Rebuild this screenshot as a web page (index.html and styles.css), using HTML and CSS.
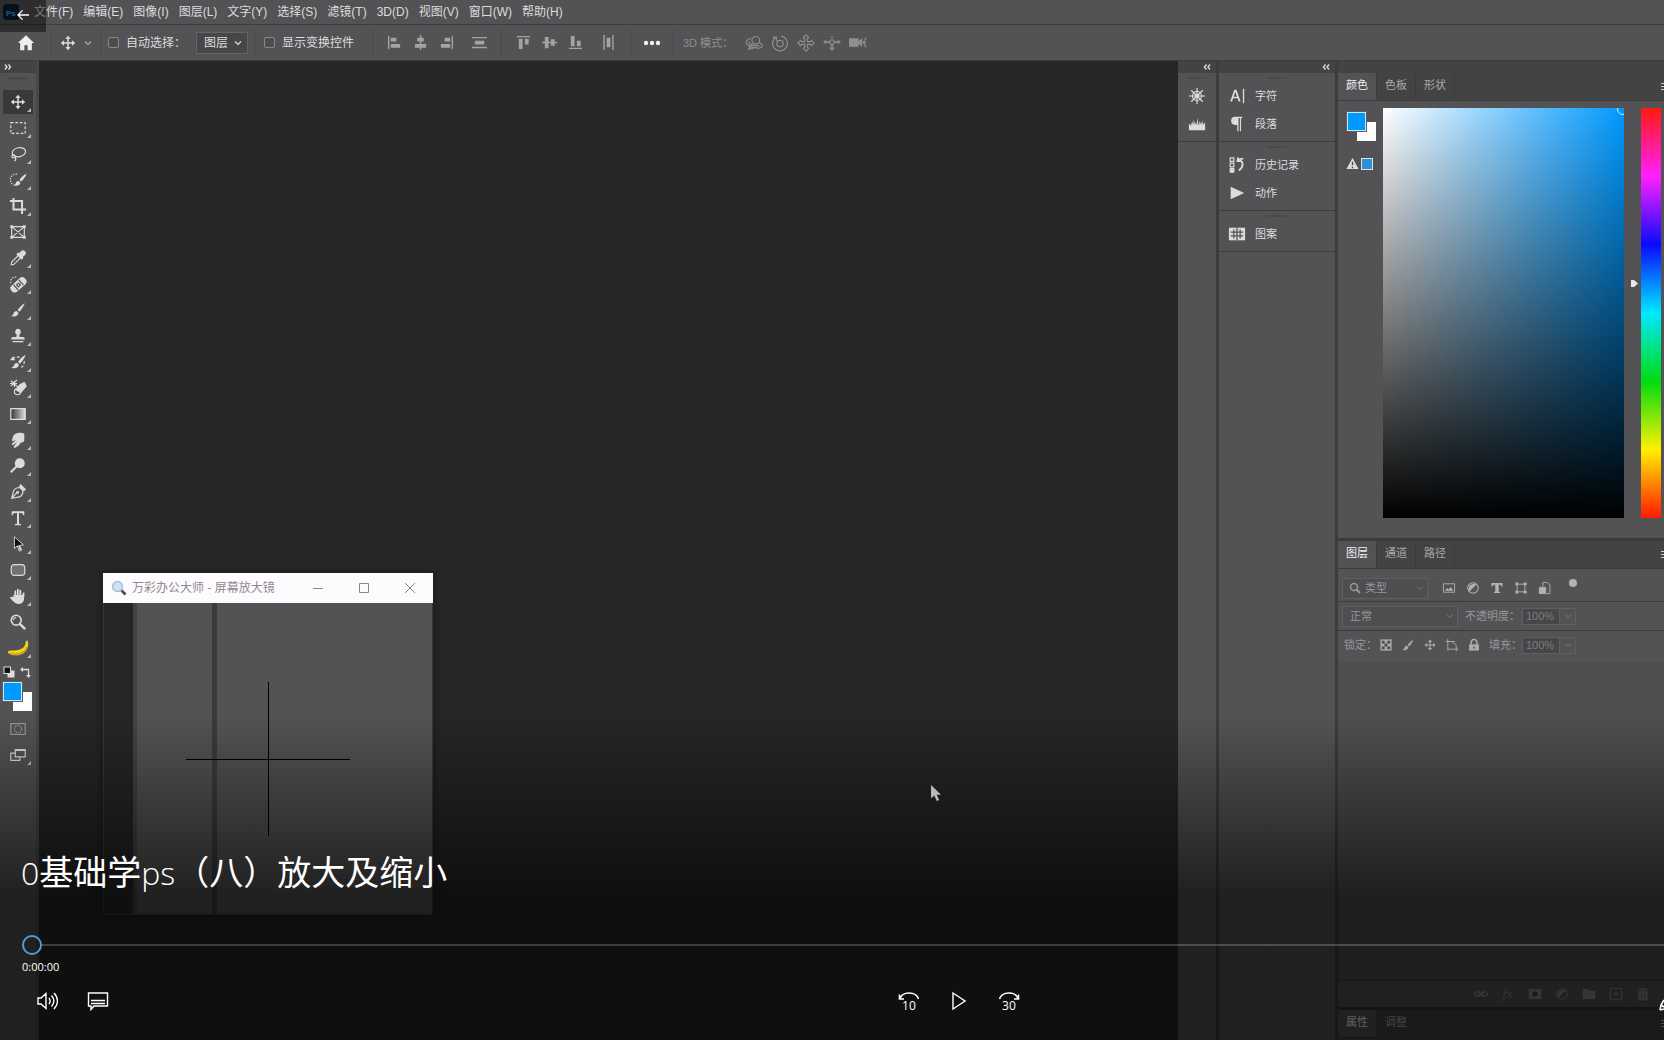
FILE: index.html
```
<!DOCTYPE html>
<html lang="zh-CN">
<head>
<meta charset="utf-8">
<title>0基础学ps（八）放大及缩小</title>
<link rel="stylesheet" href="styles.css">
</head>
<body>
<svg class="defs" aria-hidden="true">
  <symbol id="move" viewBox="0 0 20 20"><path d="M10 4v12M4 10h12" stroke="currentColor" stroke-width="1.6" fill="none"/><path d="M10 2l3 3.6H7zM10 18l3-3.6H7zM2 10l3.6-3v6zM18 10l-3.600-3v6z" fill="currentColor"/></symbol>
  <symbol id="brush" viewBox="0 0 20 20"><path d="M17.500 2.500c-3 1.500-6 5-8 7.500l2 2c2.500-2.500 5-6 6-9.500zM8.500 11c-2 0-3 1-3.500 3-.4 1.500-1.500 2.500-3 2.800 3 1.200 8 .7 8.500-3.800z" fill="currentColor"/></symbol>
  <symbol id="chev" viewBox="0 0 10 10"><path d="M2 3.500l3 3 3-3" fill="none" stroke="currentColor" stroke-width="1.200"/></symbol>
  <symbol id="lchev" viewBox="0 0 10 8"><path d="M4.500 1.500L2.500 4l2 2.500M8 1.500L6 4l2 2.500" fill="none" stroke="currentColor" stroke-width="1.400"/></symbol>
  <symbol id="lines" viewBox="0 0 10 10"><path d="M0 1.500h10M0 4.500h10M0 7.500h10" stroke="currentColor" stroke-width="1"/></symbol>
  <symbol id="half" viewBox="0 0 20 20"><circle cx="10" cy="10" r="7.500" fill="none" stroke="currentColor" stroke-width="1.500"/><path d="M15 5A7.300 7.300 0 0 0 5 15z" fill="currentColor"/></symbol>
</svg>
<div class="stage">
  <div class="app">
    <header class="menubar">
      <svg class="logo" viewBox="0 0 16 16" role="img" aria-label="Ps"><rect width="16" height="16" rx="3" fill="#06203c"/><text x="3" y="12" class="logo-text">Ps</text></svg>
      <nav class="menus">
        <a href="#">文件(F)</a><a href="#">编辑(E)</a><a href="#">图像(I)</a><a href="#">图层(L)</a><a href="#">文字(Y)</a><a href="#">选择(S)</a><a href="#">滤镜(T)</a><a href="#">3D(D)</a><a href="#">视图(V)</a><a href="#">窗口(W)</a><a href="#">帮助(H)</a>
      </nav>
    </header>

    <div class="options">
      <button class="home" aria-label="主页"><svg viewBox="0 0 20 20"><path d="M10 1.500L1 10h2.500v8h4.700v-5.500h3.600V18h4.700v-8H19z" fill="currentColor"/></svg></button>
      <button class="preset" aria-label="移动工具"><svg class="i18"><use href="#move"/></svg><svg class="i10"><use href="#chev"/></svg></button>
      <div class="group auto">
        <label class="check"><input type="checkbox"><span>自动选择：</span></label>
        <div class="picker"><select aria-label="自动选择"><option>图层</option><option>组</option></select><svg class="i10"><use href="#chev"/></svg></div>
      </div>
      <div class="group transform"><label class="check"><input type="checkbox"><span>显示变换控件</span></label></div>
      <div class="group aligns">
        <button aria-label="左对齐"><svg viewBox="0 0 16 16"><path d="M1 1h1.500v14H1zM4 3h6v4H4zM4 9.500h10v4H4z"/></svg></button>
        <button aria-label="水平居中"><svg viewBox="0 0 16 16"><path d="M7.300 0h1.500v16H7.300zM4.500 3h7v4h-7zM2 9.500h12v4H2z"/></svg></button>
        <button aria-label="右对齐"><svg viewBox="0 0 16 16"><path d="M13.500 1H15v14h-1.500zM6 3h6v4H6zM2 9.500h10v4H2z"/></svg></button>
        <button class="wide" aria-label="垂直分布"><svg viewBox="0 0 16 16"><path d="M0 2h16v1.500H0zM0 12.500h16V14H0zM3 6h10v4H3z"/></svg></button>
      </div>
      <div class="group valigns">
        <button aria-label="顶对齐"><svg viewBox="0 0 16 16"><path d="M1 1h14v1.500H1zM3 4h4v11H3zM9.500 4h4v6h-4z"/></svg></button>
        <button aria-label="垂直居中"><svg viewBox="0 0 16 16"><path d="M0 7.300h16v1.500H0zM3 2h4v12H3zM9.500 4.500h4v7h-4z"/></svg></button>
        <button aria-label="底对齐"><svg viewBox="0 0 16 16"><path d="M1 13.500h14V15H1zM3 1h4v11H3zM9.500 6h4v6h-4z"/></svg></button>
        <button class="wide" aria-label="水平分布"><svg viewBox="0 0 16 16"><path d="M2.500 0H4v16H2.500zM12 0h1.500v16H12zM6 3h4v10H6z"/></svg></button>
      </div>
      <div class="group more"><button aria-label="更多"><svg viewBox="0 0 18 6"><circle cx="3" cy="3" r="2.200"/><circle cx="9" cy="3" r="2.200"/><circle cx="15" cy="3" r="2.200"/></svg></button></div>
      <div class="group mode3d">
        <span>3D 模式：</span>
        <button aria-label="环绕"><svg viewBox="0 0 20 20" class="line"><circle cx="12" cy="7" r="4.200"/><path d="M7 5C2 6 0 8.500 2 11c3 4 14 6 16.500 3.500 1.500-1.600-.5-4-3-5.500M4 9c2 3 7 4.500 12 4"/><path d="M4 17l5-1-3-3z"/></svg></button>
        <button aria-label="滚动"><svg viewBox="0 0 20 20" class="line"><circle cx="10" cy="10.500" r="3.500"/><path d="M5 4a8.200 8.200 0 1 0 6-1.600M2 3.500h4v4"/></svg></button>
        <button aria-label="平移"><svg viewBox="0 0 20 20" class="line"><path d="M10 1l3 3-1.500 1v3.500H15L16 7l3 3-3 3-1-1.500h-3.500V15l1.500 1-3 3-3-3 1.500-1v-3.500H5L4 13l-3-3 3-3 1 1.500h3.500V5L7 4z"/></svg></button>
        <button aria-label="滑动"><svg viewBox="0 0 20 20" class="line"><circle cx="10" cy="9" r="2.500"/><path class="fill" d="M10 19l-3.500-4h7zM0 9l3.500-2.500v5zM20 9l-3.500-2.500v5zM10 2l1.500 2h-3z" stroke="none"/><path d="M3.500 9H7M13 9h3.500M10 12v3" stroke-width="2"/></svg></button>
        <button aria-label="变焦"><svg viewBox="0 0 20 20" class="line"><path class="fill" d="M0 5.500h10v8H0zM10 9.500L14 6v7z"/><path d="M19 4l-3 5.500 3 5.500M15 9.500h4"/></svg></button>
      </div>
    </div>

    <main class="workspace">
      <aside class="toolbar" aria-label="工具">
        <div class="strip"><svg class="flip"><use href="#lchev"/></svg></div>
        <div class="grip"></div>
        <div class="tools">
          <button class="on" aria-label="移动"><svg><use href="#move"/></svg></button>
          <button aria-label="选框"><svg viewBox="0 0 20 20" class="line"><rect x="2" y="4" width="16" height="12" stroke-dasharray="3 2"/></svg></button>
          <button aria-label="套索"><svg viewBox="0 0 20 20" class="line"><ellipse cx="11" cy="8" rx="7.500" ry="5" transform="rotate(-12 11 8)"/><path d="M5 11c-3 1-2 4 1 3 2-1 0-3-1-3zM7 14c1 1 0 3-1 4"/></svg></button>
          <button aria-label="快速选择"><svg viewBox="0 0 20 20" class="line"><path d="M9 3.500C4 3 1 6.500 1.500 10s3 6 6 6" stroke-dasharray="1.500 1.500"/><path class="fill" d="M19.500 3c-3 1-6 4-8 7l2 1.800c2.500-2.300 5-5.300 6-8.800zM10.500 11c-2 0-2.500 1-3 2.500-.4 1.500-1.200 2-2 2.500 3 1 7 0 7.200-3.300z" stroke="none"/></svg></button>
          <button aria-label="裁剪"><svg viewBox="0 0 20 20" class="line bold"><path d="M5 1v13h14M1 4.500h13.500V19"/></svg></button>
          <button class="single" aria-label="图框"><svg viewBox="0 0 20 20" class="line"><path d="M3 4h14v12H3zM3 4l14 12M17 4L3 16"/><path class="fill" d="M1.500 2.500h3v3h-3zM15.500 2.500h3v3h-3zM1.500 14.500h3v3h-3zM15.500 14.500h3v3h-3z" stroke="none"/></svg></button>
          <button aria-label="吸管"><svg viewBox="0 0 20 20" class="line"><path d="M10.500 7L3 14.500 2.500 17.500 5.500 17 13 9.500"/><path class="fill" d="M9 6l5 5 1.200-1.200-.8-1 3-2.500c2-2.500-1-5.500-3.500-3.500L11.500 5.500l-1-.8z"/></svg></button>
          <button aria-label="污点修复"><svg viewBox="0 0 20 20" class="line"><path d="M8 2.500C4 2 1 5 2 9" stroke-dasharray="1.500 1.500"/><g transform="rotate(-42 10.500 11)"><rect class="fill" x="1" y="7" width="19" height="8" rx="3.500"/><path d="M6.500 7v8M14.500 7v8" stroke="#535355"/><path d="M9 9.500h3v3H9z" stroke="#535355"/></g></svg></button>
          <button aria-label="画笔"><svg><use href="#brush"/></svg></button>
          <button aria-label="图章"><svg viewBox="0 0 20 20"><path d="M10 2a3.400 3.400 0 0 1 2 6c-1 1-.5 2.500 0 3h3.500c1.500 0 2 1 2 3H2.500c0-2 .5-3 2-3H8c.5-.5 1-2 0-3a3.400 3.400 0 0 1 2-6zM4 15.500h12V17H4z"/></svg></button>
          <button aria-label="历史画笔"><svg viewBox="0 0 20 20" class="line"><path d="M4 6c3-2 6-2 8-1M17 9c0 4-2 7-5 8" stroke-dasharray="3 2"/><path class="fill" d="M1 8l3.500-4.500L7 8zM18.500 2c-4 2-6.500 5-8.500 8l2 2c3-3 5.500-6 6.500-10zM9 11c-3 0-3 2-4 3.500-.5 1-1.500 1.500-2.500 1.500 3 2 8 1 8.500-3z" stroke="none"/></svg></button>
          <button aria-label="橡皮擦"><svg viewBox="0 0 20 20" class="line"><path d="M2 2l8 7M9 1L2 8M1 5h8M6 2v7"/><path class="fill" d="M12 6.500l5-2.500 2 4-6 7-5-3z"/><circle cx="9.500" cy="14" r="3.500"/></svg></button>
          <button aria-label="渐变"><svg viewBox="0 0 20 20"><defs><linearGradient id="gr"><stop stop-color="#333"/><stop offset="1" stop-color="#ddd"/></linearGradient></defs><rect x="2" y="4" width="16" height="12" fill="url(#gr)" stroke="#ddd" stroke-width="1.400"/></svg></button>
          <button aria-label="涂抹"><svg viewBox="0 0 20 20"><path d="M5 5c3-4 9-3.500 12-2v7c0 2-2 3-4 3-1 2-3 4-6 5.500-1.500.5-2.500-.5-1.500-1.500L9 12.500l-4.500 3c-1.500.5-2-.5-1-1.500L8 10l-4 1.500C3 11 4 7 5 5z"/></svg></button>
          <button aria-label="减淡"><svg viewBox="0 0 20 20" class="line bold"><circle class="fill" cx="12" cy="7" r="4.500"/><path d="M9 10l-7 7"/></svg></button>
          <button aria-label="钢笔"><svg viewBox="0 0 20 20" class="line"><path d="M3 17L5 9c1-2 4-4 7-4l3.500 3.500c0 3-2 6-4 7zM3 17l5.500-6"/><circle cx="9.500" cy="10.500" r="1"/><path class="fill" d="M13 2l5 5-1.500 1.500L12 4z"/></svg></button>
          <button aria-label="文字"><svg viewBox="0 0 20 20"><path d="M3 2.500h14V7h-1.200c-.3-1.700-1-2.500-3-2.500h-1.700v11c0 1 .8 1.200 2.200 1.300V18H6.700v-1.200c1.400-.1 2.200-.3 2.200-1.300v-11H7.200c-2 0-2.700.8-3 2.500H3z"/></svg></button>
          <button aria-label="路径选择"><svg viewBox="0 0 20 20"><path d="M6 2v13l3.200-3 2.300 6 2.700-1.200-2.500-5.300 4.300-.500z" stroke="#ddd" fill="#111"/><path d="M10 12l2 5.500 1.700-.8-2.200-5.200z"/></svg></button>
          <button aria-label="圆角矩形"><svg viewBox="0 0 20 20"><rect x="2.500" y="4" width="15" height="12" rx="3.500" fill="#717173" stroke="#ddd" stroke-width="1.300"/></svg></button>
          <button aria-label="抓手"><svg viewBox="0 0 20 20" class="line hand"><path d="M7 12V5M9.800 11V3M12.600 11V4M15.300 12l1-5"/><path class="fill" d="M6 10h10c0 4-1 8-5 8-4 0-6-3-8.500-6 1.500-1 3 .5 4 1z"/></svg></button>
          <button class="single" aria-label="缩放"><svg viewBox="0 0 20 20" class="line"><circle cx="8" cy="8" r="5.500" stroke-width="1.800"/><path d="M12 12l6 6" stroke-width="2.600"/><path d="M5 8c0-2 1-3 3-3"/></svg></button>
          <button aria-label="香蕉"><svg viewBox="0 0 20 20" class="banana"><path d="M17 4l1.500-1c2.500 6-1 13-9 13.500-4 .2-8-.5-8.500-2.500C.5 12 3 12.300 6 12.200 12 12 17 10 17 4z" fill="#f5d21c"/><path d="M2 15c6 1.500 14 .5 16.500-6" fill="none" stroke="#b98a08"/></svg></button>
        </div>
        <div class="mini">
          <button aria-label="默认颜色"><svg viewBox="0 0 12 12"><rect x="4.500" y="4.500" width="7" height="7"/><rect x="1" y="1" width="6.500" height="6.500" fill="#111" stroke="#ddd"/></svg></button>
          <button aria-label="切换颜色"><svg viewBox="0 0 12 12" class="line"><path d="M3 3.500h5.500v6"/><path class="fill" d="M0 3.500L3 1v5zM8.500 12L6 9h5z" stroke="none"/></svg></button>
        </div>
        <div class="swatches"><button class="fg" aria-label="前景色"></button><button class="bg" aria-label="背景色"></button></div>
        <div class="tools modes">
          <button class="single dim" aria-label="快速蒙版"><svg viewBox="0 0 20 20" class="line"><rect x="2" y="4" width="16" height="12"/><circle cx="10" cy="10" r="4" stroke-dasharray="1.500 1"/></svg></button>
          <button aria-label="屏幕模式"><svg viewBox="0 0 20 20" class="line"><path d="M7 8H2v8h10v-4M7 4h11v8H7zM7 5h11"/></svg></button>
        </div>
      </aside>

      <section class="canvas" aria-label="画布"></section>

      <aside class="dock narrow">
        <div class="strip"><svg><use href="#lchev"/></svg></div>
        <div class="dock-group">
          <button aria-label="导航器"><svg viewBox="0 0 20 20" class="line"><circle cx="10" cy="10" r="5"/><circle cx="10" cy="10" r="1.800"/><path d="M10 1v18M1 10h18M3.600 3.600l12.800 12.800M16.400 3.600L3.600 16.400"/></svg></button>
          <button aria-label="直方图"><svg viewBox="0 0 20 20"><path d="M1 17V9l1.500 3L4 8v4l2-7v6l1.500-5v5L9 8v4l2-9v9l2-6v5l2-4v4l1.500-5v5L19 8v9z"/></svg></button>
        </div>
      </aside>

      <aside class="dock labelled">
        <div class="strip"><svg><use href="#lchev"/></svg></div>
        <div class="dock-group">
          <button><svg viewBox="0 0 20 20"><path d="M7 3h2.400L14 16h-2.200l-1.200-3.500H5.700L4.500 16H2.400zM8.200 5.200L6.300 10.800H10z"/><path d="M16.500 2H18v16h-1.500z"/></svg>字符</button>
          <button><svg viewBox="0 0 20 20"><path d="M8 2h8v1.300h-1.500V18h-1.300V3.300h-1.500V18h-1.400v-7H8a4.500 4.500 0 0 1 0-9z"/></svg>段落</button>
        </div>
        <div class="dock-group">
          <button><svg viewBox="0 0 20 20" class="line"><path d="M2.500 2h4v4h-4zM2.500 8h4v4h-4z"/><path class="fill" d="M2.500 14h4v4h-4z"/><path d="M17 3c-3 0-4 1-4 2 4 1 5 7-1 11" stroke-width="2"/><path class="fill" d="M10 6l1-4 4 4z"/></svg>历史记录</button>
          <button><svg viewBox="0 0 20 20"><path d="M3 3l15 7-15 7z"/></svg>动作</button>
        </div>
        <div class="dock-group">
          <button><svg viewBox="0 0 20 20"><path d="M1 3h18v14H1z"/><path d="M6.500 5v10M13.500 5v10M10 3v14M3 8h14M3 12h14" stroke="#535355" stroke-width="1.400"/></svg>图案</button>
        </div>
      </aside>

      <aside class="panels">
        <div class="strip"></div>
        <section class="color">
          <div class="tabs"><button class="on">颜色</button><button>色板</button><button>形状</button><svg class="pmenu"><use href="#lines"/></svg></div>
          <div class="color-body">
            <div class="color-side">
              <div class="swatches"><button class="fg" aria-label="前景色"></button><button class="bg" aria-label="背景色"></button></div>
              <div class="warn"><svg viewBox="0 0 14 14"><path d="M7 1l6.500 12H.5z"/><path d="M7 5v4M7 10.500v1.500" stroke="#444" stroke-width="1.500"/></svg><button class="gamut" aria-label="溢色"></button></div>
            </div>
            <div class="field"><i class="ring"></i></div>
            <div class="hue"><svg class="pointer" viewBox="0 0 7 9"><path d="M0 1h3l4 3.500L3 8H0z" fill="#e8e8e8"/></svg></div>
          </div>
        </section>
        <section class="layers">
          <div class="tabs"><button class="on">图层</button><button>通道</button><button>路径</button><svg class="pmenu"><use href="#lines"/></svg></div>
          <div class="row filter">
            <div class="picker search"><svg class="i12 line" viewBox="0 0 12 12"><circle cx="5" cy="5" r="3.500" stroke-width="1.600"/><path d="M7.500 7.500L11 11" stroke-width="2"/></svg><select aria-label="类型"><option>类型</option></select><svg class="i10"><use href="#chev"/></svg></div>
            <div class="filters">
              <button aria-label="像素"><svg viewBox="0 0 20 20" class="line"><path d="M2 4h16v12H2z"/><path class="fill" d="M4 14l3.500-4 2 2 3-3.500L16 14z" stroke="none"/></svg></button>
              <button aria-label="调整"><svg><use href="#half"/></svg></button>
              <button aria-label="文字"><svg viewBox="0 0 20 20"><path d="M2 3h16v5h-1.500c-.5-2-1.200-2.700-4-2.700v9.500c0 1 .8 1.200 2 1.300V17h-9v-.9c1.200-.1 2-.3 2-1.300V5.300c-2.800 0-3.500.7-4 2.700H2z"/></svg></button>
              <button aria-label="形状"><svg viewBox="0 0 20 20" class="line"><path d="M4.500 4.500h11v11h-11z"/><path class="fill" d="M2 2h4v4H2zM14 2h4v4h-4zM2 14h4v4H2zM14 14h4v4h-4z" stroke="none"/></svg></button>
              <button aria-label="智能对象"><svg viewBox="0 0 20 20" class="line"><path d="M7 8V2h6l4 4v12h-5"/><path class="fill" d="M2 9h9v9H2z"/></svg></button>
            </div>
            <button class="toggle" aria-label="过滤开关"></button>
          </div>
          <div class="row blend">
            <div class="picker"><select aria-label="混合模式"><option>正常</option></select><svg class="i10"><use href="#chev"/></svg></div>
            <label for="opacity">不透明度：</label>
            <div class="num"><input id="opacity" value="100%"><svg class="i10"><use href="#chev"/></svg></div>
          </div>
          <div class="row lock">
            <span>锁定：</span>
            <div class="locks">
              <button aria-label="透明像素"><svg viewBox="0 0 20 20"><path d="M2 2h16v16H2z"/><path d="M4 4h4v4H4zM12 4h4v4h-4zM8 8h4v4H8zM4 12h4v4H4zM12 12h4v4h-4z" fill="#4c4a4d"/></svg></button>
              <button aria-label="图像像素"><svg><use href="#brush"/></svg></button>
              <button aria-label="位置"><svg><use href="#move"/></svg></button>
              <button aria-label="画板"><svg viewBox="0 0 20 20" class="line"><path d="M4 1v17M1 5h13M4 16h15M10 5l6 5v9"/></svg></button>
              <button aria-label="全部"><svg viewBox="0 0 20 20"><path d="M3 9h14v9H3z"/><path d="M6 9V6a4 4 0 0 1 8 0v3" fill="none" stroke="currentColor" stroke-width="2.200"/><path d="M9 12h2v3H9z" fill="#4c4a4d"/></svg></button>
            </div>
            <label for="fill">填充：</label>
            <div class="num"><input id="fill" value="100%"><svg class="i10"><use href="#chev"/></svg></div>
          </div>
          <div class="list"></div>
          <div class="layer-actions">
            <button aria-label="链接"><svg viewBox="0 0 20 20" class="line bold"><rect x="1" y="7" width="8" height="6" rx="3"/><rect x="11" y="7" width="8" height="6" rx="3"/><path d="M6 10h8"/></svg></button>
            <button class="fx">fx</button>
            <button aria-label="蒙版"><svg viewBox="0 0 20 20"><path d="M1 3h18v14H1z"/><circle cx="10" cy="10" r="4" fill="#4c4a4d"/></svg></button>
            <button aria-label="调整层"><svg><use href="#half"/></svg></button>
            <button aria-label="组"><svg viewBox="0 0 20 20"><path d="M1 3h7l2 2.500h9V17H1z"/></svg></button>
            <button aria-label="新建"><svg viewBox="0 0 20 20" class="line"><path d="M2 2h16v16H2zM10 6.500v7M6.500 10h7"/></svg></button>
            <button aria-label="删除"><svg viewBox="0 0 20 20" class="line"><path d="M1 4h18M7 4V2h6v2"/><path class="fill" d="M3.500 6h13v13h-13z" stroke="none"/><path d="M8 8v9M12 8v9" stroke="#4c4a4d"/></svg></button>
          </div>
        </section>
        <section class="props"><div class="tabs"><button class="on">属性</button><button>调整</button><svg class="pmenu"><use href="#lines"/></svg></div></section>
      </aside>
    </main>
  </div>

  <section class="magnifier" aria-label="屏幕放大镜">
    <header><svg class="lens" viewBox="0 0 16 16"><circle cx="6.500" cy="6.500" r="5" fill="#cfe2f3" stroke="#a9bfd2" stroke-width="1.400"/><path d="M10.500 10.500l4 4" stroke="#444b55" stroke-width="2.600"/></svg>
      <h2>万彩办公大师 - 屏幕放大镜</h2>
      <button aria-label="最小化"><svg viewBox="0 0 12 12"><path d="M1 6.500h10"/></svg></button>
      <button aria-label="最大化"><svg viewBox="0 0 12 12"><path d="M1.500 1.500h9v9h-9z"/></svg></button>
      <button aria-label="关闭"><svg viewBox="0 0 12 12"><path d="M1 1l10 10M11 1L1 11"/></svg></button>
    </header>
    <div class="lens-view"><i class="cross-v"></i><i class="cross-h"></i></div>
  </section>

  <svg class="cursor" viewBox="0 0 12 18"><path d="M1 1v13.500l3.200-3L6.800 17l2.400-1-2.500-5.300H11z" fill="#b9b9bb"/></svg>

  <div class="player">
    <button class="back" aria-label="返回"><svg viewBox="0 0 14 12"><path d="M6 1L1 6l5 5M1 6h12" fill="none" stroke="#fff" stroke-width="1.400"/></svg></button>
    <div class="transport">
      <h1><span class="thin">0</span>基础学<span class="thin">ps</span>（八）放大及缩小</h1>
      <input class="seek" type="range" min="0" max="100" value="0" aria-label="进度">
      <time>0:00:00</time>
      <div class="controls">
        <div class="set">
          <button aria-label="音量"><svg viewBox="0 0 22 20"><path d="M1 7h3l5-4.500v15L4 13H1zM12 7c1.500 2 1.500 4 0 6M14.500 4.500c3 3.500 3 7.500 0 11M17 2c4.500 5 4.500 11 0 16"/></svg></button>
          <button aria-label="字幕"><svg viewBox="0 0 22 20"><path d="M1.500 2h19v13H7l-3 3.500V15H1.500zM4 9.500h14M4 12.500h14"/></svg></button>
        </div>
        <i class="gap-left"></i>
        <div class="set">
          <button class="jump" aria-label="后退 10 秒"><svg viewBox="0 0 22 10"><path d="M2 8c2-8 16-8 18.500 0M1.500 3.500V8H6"/></svg><span>10</span></button>
          <button aria-label="播放"><svg viewBox="0 0 22 20"><path d="M5 2l12 8-12 8z"/></svg></button>
          <button class="jump" aria-label="前进 30 秒"><svg viewBox="0 0 22 10"><path d="M1.500 8c2.500-8 16.500-8 18.500 0M20.500 3.500V8H16"/></svg><span>30</span></button>
        </div>
        <i class="gap-right"></i>
        <svg class="edit" viewBox="0 0 5 12"><path d="M1 11l1-5 3-5M1 11l4-1M2 6l3 2" fill="none" stroke="#fff" stroke-width="1.600"/></svg>
      </div>
    </div>
  </div>
</div>
</body>
</html>
```
FILE: styles.css
```
* { box-sizing: border-box; }

:root {
  --panel: #535355;
  --dark: #434344;
  --edge: #3c3b3d;
  --canvas: #262626;
  --ink: #dcdcde;
  --dim: #8f8e90;
  --blue: #0099ff;
}

body {
  margin: 0;
  background: var(--canvas);
  color: var(--ink);
  font: 11px/16px "Liberation Sans", "Noto Sans CJK SC", sans-serif;
}

button, input, select { font: inherit; color: inherit; margin: 0; padding: 0; border: 0; background: none; border-radius: 0; }
button { display: flex; align-items: center; justify-content: center; }
button svg { display: block; flex: none; fill: currentColor; }
select { appearance: none; }
a { color: inherit; text-decoration: none; }
h1, h2 { margin: 0; font-weight: 400; }

.defs { position: absolute; width: 0; height: 0; }
.line { fill: none; stroke: currentColor; stroke-width: 1.3; }
button svg.line { fill: none; }
.line.bold { stroke-width: 2.2; }
.line.hand { stroke-width: 2; stroke-linecap: round; }
.line .fill { fill: currentColor; }
.i10 { width: 10px; height: 10px; }
.i12 { width: 12px; height: 12px; }
.i18 { width: 18px; height: 18px; }

.stage { position: relative; overflow: hidden; }
.app { display: flex; flex-direction: column; min-height: 100vh; }

/* Menu bar */
.menubar { display: flex; align-items: center; height: 24px; padding-left: 3px; background: var(--panel); font-size: 12px; }
.logo { width: 16px; height: 16px; }
.logo-text { font: 700 8px "Liberation Sans", sans-serif; fill: #4c9ad4; }
.menus { display: flex; gap: 10px; margin-left: 15px; white-space: nowrap; }

/* Options bar */
.options { display: flex; align-items: center; height: 37px; background: var(--panel); border-top: 1px solid var(--edge); border-bottom: 1px solid var(--edge); font-size: 12px; white-space: nowrap; }
.options > * { height: 26px; border-right: 1px solid #48474a; }
.home { width: 52px; color: #eee; }
.home svg { width: 18px; height: 18px; }
.preset { width: 49px; gap: 6px; }
.preset .i10 { color: #aaa9ab; }
.group { display: flex; align-items: center; }
.auto { width: 154px; padding-left: 7px; gap: 4px; }
.auto .check { width: 84px; }
.transform { width: 118px; padding-left: 9px; }
.check { display: flex; align-items: center; gap: 7px; }
.check input { appearance: none; width: 11px; height: 11px; border: 1px solid #89888a; border-radius: 2px; background: #4c4b4d; }
.picker { display: flex; align-items: center; }
.picker select { flex: 1; min-width: 0; }
.auto .picker { width: 52px; height: 22px; padding: 0 4px 0 7px; border: 1px solid #656466; background: #474648; }
.aligns { width: 129px; padding-left: 8px; color: #a4a3a5; }
.valigns { width: 129px; padding-left: 8px; color: #a4a3a5; }
.aligns button, .valigns button { width: 26px; }
.aligns .wide, .valigns .wide { width: 41px; }
.group button svg { width: 15px; height: 15px; }
.more { width: 43px; justify-content: center; color: #eee; }
.more button svg { width: 18px; height: 6px; }
.options .mode3d { padding-left: 9px; border: 0; color: var(--dim); }
.mode3d span { width: 58px; font-size: 11px; }
.mode3d button { width: 26px; }
.mode3d button svg { width: 18px; height: 18px; }

/* Workspace */
.workspace { flex: 1; display: flex; }
.canvas { flex: 1; background: var(--canvas); }
.strip { display: flex; align-items: center; height: 12px; background: var(--dark); }
.strip svg { width: 10px; height: 8px; }

.toolbar { width: 39px; background: var(--panel); border-right: 3px solid #48484a; }
.toolbar .strip { padding-left: 3px; }
.flip { transform: scaleX(-1); }
.grip { width: 20px; height: 3px; margin: 4px auto 10px 8px; background: #4a494b; }
.tools { display: flex; flex-direction: column; gap: 2px; padding-left: 3px; }
.tools button { position: relative; width: 30px; height: 24px; }
.tools button svg { width: 18px; height: 18px; }
.tools button::after { content: ""; position: absolute; right: 2px; bottom: 2px; border: 2px solid transparent; border-right-color: #bbb; border-bottom-color: #bbb; }
.tools .single::after { display: none; }
.tools .on { background: #39383a; }
.tools button .banana { width: 22px; height: 22px; }
.tools .dim { color: #98979a; }
.mini { display: flex; gap: 5px; padding: 6px 0 0 3px; }
.mini svg { width: 12px; height: 12px; }
.modes { padding-top: 6px; }
.swatches { position: relative; height: 29px; margin: 4px 0 0 3px; }
.swatches .fg, .swatches .bg { position: absolute; width: 19px; height: 19px; }
.swatches .fg { left: 0; top: 0; z-index: 1; background: var(--blue); border: 1px solid #cfe6f7; outline: 1px solid #55606a; outline-offset: 0; }
.swatches .bg { left: 10px; top: 10px; background: #fff; }

/* Icon docks */
.dock { background: var(--panel); border-right: 3px solid var(--edge); }
.dock .strip { justify-content: flex-end; padding-right: 4px; }
.dock.narrow { width: 41px; }
.dock.labelled { width: 119px; }
.dock-group { display: flex; flex-direction: column; padding: 10px 0 4px; gap: 2px; border-bottom: 1px solid var(--edge); background: linear-gradient(#4a494b, #4a494b) center 4px / 20px 2px no-repeat; }
.dock-group button { height: 26px; width: 100%; }
.dock-group svg { width: 18px; height: 18px; }
.labelled button { justify-content: flex-start; gap: 9px; padding-left: 9px; }

/* Right panels */
.panels { display: flex; flex-direction: column; width: 326px; background: var(--panel); }
.tabs { display: flex; height: 28px; background: var(--dark); border-bottom: 1px solid var(--edge); color: #aaa9ab; overflow: hidden; }
.tabs button { padding: 0 8px 4px; border-right: 1px solid var(--edge); }
.tabs .on { height: 28px; background: var(--panel); color: #f0f0f0; }
.tabs .pmenu { flex: none; width: 10px; height: 10px; margin: 9px -7px 0 auto; color: #ccc; }

.color { border-bottom: 3px solid var(--edge); }
.color-body { display: flex; padding: 7px 3px 20px 8px; }
.color-side { width: 37px; padding-top: 4px; }
.color-side .swatches { margin: 0 0 0 1px; }
.warn { display: flex; align-items: center; gap: 2px; margin-top: 16px; }
.warn svg { width: 13px; height: 13px; fill: var(--ink); }
.gamut { width: 12px; height: 12px; background: #2f8fd8; border: 1px solid #d5e5f0; }
.field { position: relative; flex: 1; height: 410px; overflow: hidden; background: linear-gradient(to top, #000, transparent), linear-gradient(to right, #fff, var(--blue)); }
.ring { position: absolute; right: -5px; top: -5px; width: 12px; height: 12px; border: 1px solid #d8efff; border-radius: 50%; }
.hue { position: relative; width: 20px; height: 410px; margin-left: 17px; background: linear-gradient(#ff1a10, #ff20ff, #0a0aff, #00e8ff, #00dc10, #fff000, #ff1a00); }
.pointer { position: absolute; left: -10px; top: 171px; width: 7px; height: 9px; }

.layers { flex: 1; display: flex; flex-direction: column; border-bottom: 3px solid #343335; color: #a3a2a4; }
.row { display: flex; align-items: center; height: 29px; padding-left: 4px; border-bottom: 1px solid var(--edge); color: #98979a; white-space: nowrap; }
.filter { height: 33px; padding-top: 6px; }
.row .picker { height: 21px; border: 1px solid #5f5e60; background: #4f4d50; padding: 0 2px 0 6px; }
.row .picker select { padding-left: 4px; }
.row .i10 { color: #69686a; }
.row .search { width: 86px; }
.filters { display: flex; margin-left: 9px; color: #b3b2b4; }
.filters button { width: 24px; }
.filters svg { width: 14px; height: 14px; }
.toggle { align-self: flex-start; width: 8px; height: 8px; margin: 4px 0 0 12px; border-radius: 50%; background: #b3b2b4; }
.row.blend .picker { width: 116px; padding-left: 3px; }
.blend label { width: 64px; padding-left: 7px; }
.num { display: flex; align-items: center; width: 54px; height: 17px; border: 1px solid #5f5e60; }
.num input { width: 37px; height: 15px; padding-left: 3px; background: #474648; border-right: 1px solid #5f5e60; color: #7e7d80; }
.num svg { margin-left: 3px; }
.row.lock { height: 32px; padding: 0 0 3px 6px; border-bottom-color: #525053; }
.lock > span { width: 31px; }
.locks { display: flex; color: #acabad; }
.locks button { width: 22px; }
.locks svg { width: 14px; height: 14px; }
.lock label { width: 37px; padding-left: 4px; }
.list { flex: 1; background: #504d51; }
.layer-actions { display: flex; justify-content: flex-end; height: 27px; padding-right: 8px; border-top: 1px solid var(--edge); color: #8a898c; }
.layer-actions button { width: 27px; }
.layer-actions svg { width: 14px; height: 14px; }
.fx { font: italic 13px/16px "Liberation Serif", serif; }
.props { padding-bottom: 2px; background: var(--dark); }

/* Floating magnifier window */
.magnifier { position: absolute; left: 103px; top: 573px; width: 330px; box-shadow: 0 0 8px rgba(0, 0, 0, .4); }
.magnifier header { display: flex; align-items: center; height: 30px; padding-left: 8px; background: #fdfbfe; color: #8f8890; }
.magnifier h2 { flex: 1; margin-left: 5px; font-size: 12px; line-height: 16px; white-space: nowrap; }
.lens { width: 16px; height: 16px; }
.magnifier button { width: 46px; height: 30px; }
.magnifier button svg { width: 12px; height: 12px; fill: none; stroke: #888; stroke-width: 1; }
.lens-view { position: relative; height: 312px; border: 1px solid #39383a; border-top: 0; background: linear-gradient(to right, var(--canvas) 29px, #434245 29px 33px, var(--panel) 33px 108px, #3c3a3d 108px 113px, var(--panel) 113px); }
.cross-v, .cross-h { position: absolute; background: #000; }
.cross-v { left: 164px; top: 79px; width: 1px; height: 154px; }
.cross-h { left: 82px; top: 156px; width: 164px; height: 1px; }

.cursor { position: absolute; left: 930px; top: 784px; width: 12px; height: 18px; z-index: 2; }

/* Video player chrome */
.player { position: absolute; inset: 0; display: flex; flex-direction: column; justify-content: space-between; color: #fff; }
.back { width: 46px; height: 32px; background: rgba(0, 0, 0, .45); }
.back svg { width: 13px; height: 12px; margin-top: -2px; }
.transport { padding: 135px 0 23px; background: linear-gradient(transparent, rgba(0, 0, 0, .61) 180px); }
.transport h1 { padding-left: 21px; font: 400 34px/46px "Open Sans", "Noto Sans CJK SC", sans-serif; white-space: nowrap; }
.thin { font-size: 32px; font-weight: 300; }
.seek { display: block; appearance: none; width: calc(100% - 22px); height: 20px; margin: 39px 0 0 22px; background: linear-gradient(#fff3, #fff3) 20px center / 100% 2px no-repeat; }
.seek::-webkit-slider-thumb { appearance: none; width: 20px; height: 20px; border: 2px solid #4a9fd8; border-radius: 50%; background: transparent; }
.seek::-moz-range-thumb { width: 16px; height: 16px; border: 2px solid #4a9fd8; border-radius: 50%; background: transparent; }
.transport time { display: block; margin-top: 4px; padding-left: 22px; font: 11px/16px "Open Sans", sans-serif; }
.controls { display: flex; align-items: center; height: 32px; margin-top: 10px; padding-left: 23px; }
.set { display: flex; }
.set button { width: 50px; height: 32px; }
.set svg { width: 22px; height: 20px; fill: none; stroke: #fff; stroke-width: 1.4; }
.set .jump { flex-direction: column; }
.set .jump svg { width: 22px; height: 10px; stroke-width: 1.6; }
.jump span { font: 12px/12px "Open Sans", sans-serif; margin-top: -1px; }
.gap-left { flex: 28; }
.gap-right { flex: 23; }
.edit { width: 5px; height: 12px; margin-top: 8px; }
```
